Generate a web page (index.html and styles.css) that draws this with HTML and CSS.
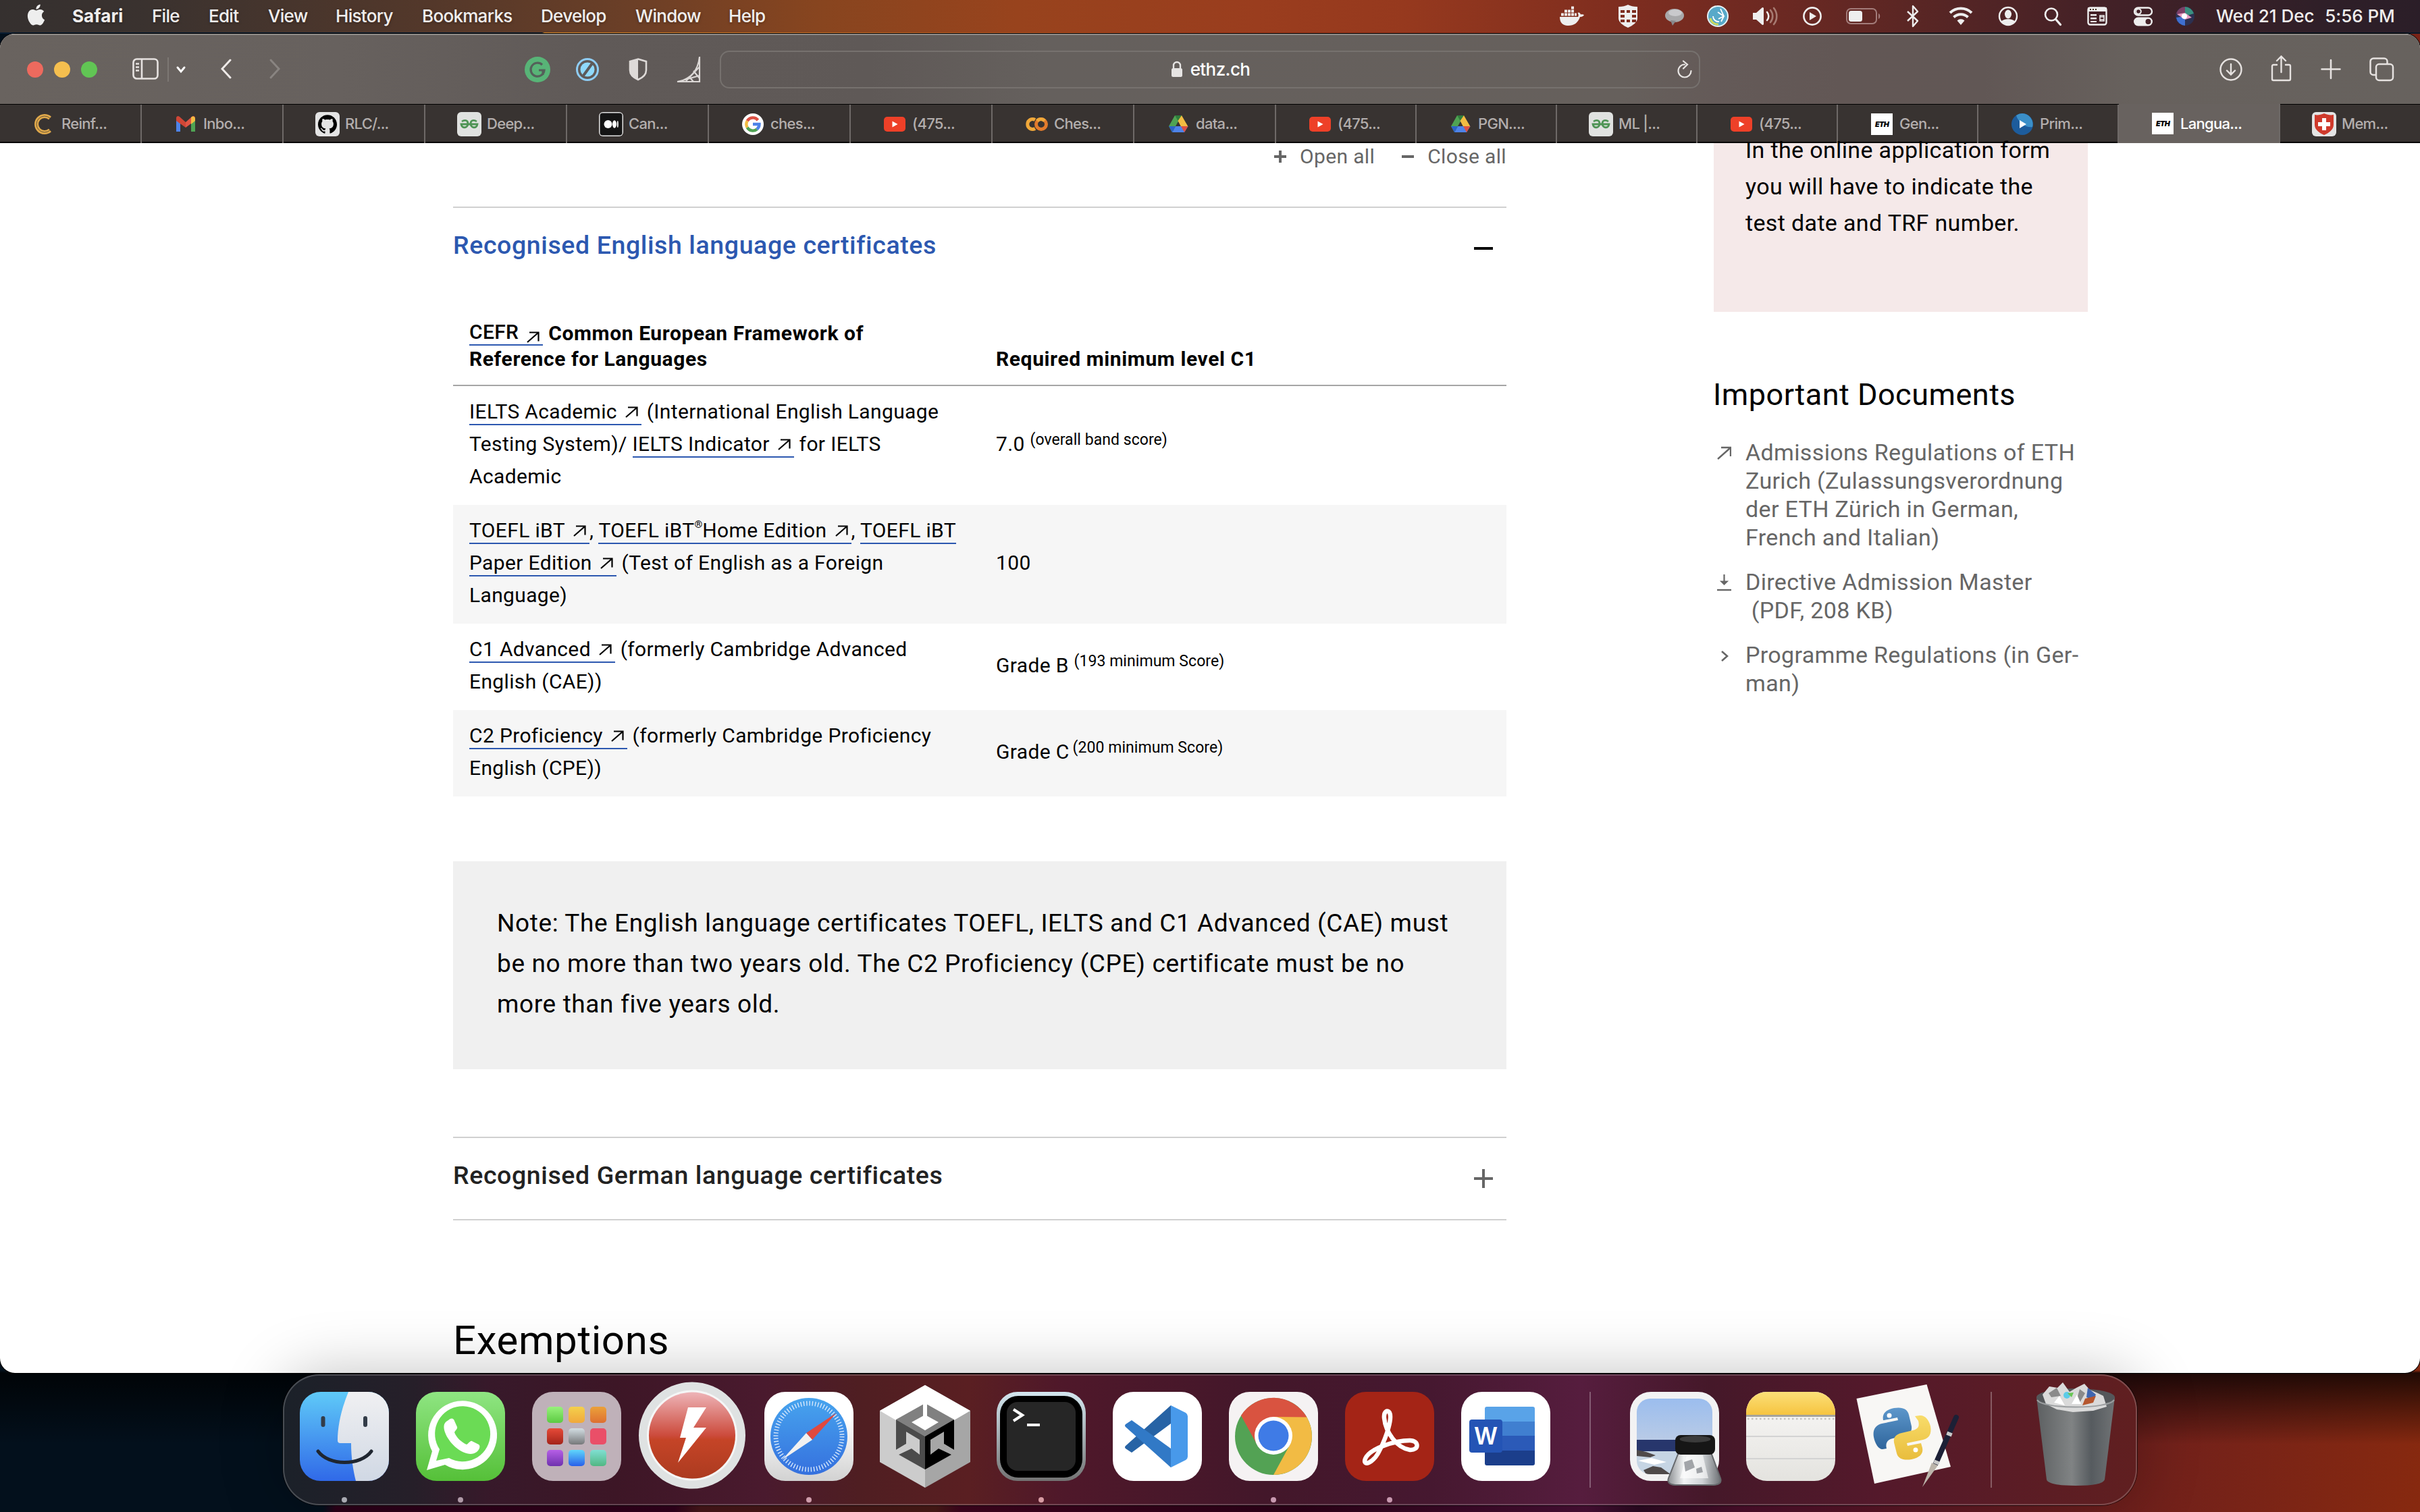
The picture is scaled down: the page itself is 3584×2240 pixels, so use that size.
FILE: index.html
```
<!DOCTYPE html>
<html lang="en">
<head>
<meta charset="utf-8">
<title>Language certificates</title>
<link rel="stylesheet" href="styles.css">
</head>
<body>
<svg class="defs" aria-hidden="true">
  <defs>
    <symbol id="ext" viewBox="0 0 19 17"><path d="M4 1.500h13.500v13M17 2 1 16" fill="none" stroke="currentColor" stroke-width="2.200"/></symbol>
    <symbol id="yt" viewBox="0 0 36 36"><rect x="2" y="7" width="32" height="22" rx="5" fill="#ee4028"/><path d="M14.500 13.500v9l8-4.500z" fill="#fff"/></symbol>
    <symbol id="drive" viewBox="0 0 36 36"><path d="M13 5h10l-8.500 15L9 30 4 21z" fill="#4fa353"/><path d="M13 5h10l-5 8.500z" fill="#2f7d3c"/><path d="M23 5l9.500 16.500H22L17.500 13z" fill="#f2bc42"/><path d="M9 30l5-9h18.500L27 30z" fill="#4e83e8"/><path d="M22 21h10.500L27 30z" fill="#dd5144"/><path d="M4 21h10L9 30z" fill="#2c62c9"/></symbol>
    <symbol id="gfg" viewBox="0 0 36 36"><rect width="36" height="36" rx="6" fill="#e0e2e0"/><path d="M7 14c4-3 9-2 9 3 0 7-9 8-10 1h24c-1 7-10 6-10-1 0-5 5-6 9-3" fill="none" stroke="#4f9455" stroke-width="2.800"/></symbol>
    <symbol id="eth" viewBox="0 0 36 36"><rect x="2" y="2" width="32" height="32" fill="#fff"/><text x="18" y="22" text-anchor="middle" font-family="Inter, sans-serif" font-weight="900" font-style="italic" font-size="10.500" textLength="20" lengthAdjust="spacingAndGlyphs" fill="#000">ETH</text></symbol>
    <linearGradient id="gFinder" x1="0" y1="0" x2="0" y2="1"><stop offset="0" stop-color="#5fcaf8"/><stop offset="1" stop-color="#3069e8"/></linearGradient>
    <linearGradient id="gFace" x1="0" y1="0" x2="0" y2="1"><stop offset="0" stop-color="#f0f0f2"/><stop offset="1" stop-color="#d0d8e4"/></linearGradient>
    <linearGradient id="gWa" x1="0" y1="0" x2="0" y2="1"><stop offset="0" stop-color="#8fe582"/><stop offset="1" stop-color="#55c038"/></linearGradient>
    <linearGradient id="gBolt" x1="0" y1="0" x2="0" y2="1"><stop offset="0" stop-color="#eeb4b8"/><stop offset=".5" stop-color="#cc4b3c"/><stop offset=".55" stop-color="#c54427"/><stop offset="1" stop-color="#ac3b20"/></linearGradient>
    <linearGradient id="gWhite" x1="0" y1="0" x2="0" y2="1"><stop offset=".3" stop-color="#fff"/><stop offset="1" stop-color="#d2d2d2"/></linearGradient>
    <linearGradient id="gSaf" x1="0" y1="0" x2="0" y2="1"><stop offset="0" stop-color="#47a4ee"/><stop offset="1" stop-color="#3570de"/></linearGradient>
    <linearGradient id="gTerm" x1="0" y1="0" x2="0" y2="1"><stop offset="0" stop-color="#d3e6ef"/><stop offset="1" stop-color="#737373"/></linearGradient>
    <linearGradient id="gSky" x1="0" y1="0" x2="0" y2="1"><stop offset="0" stop-color="#9bbdee"/><stop offset="1" stop-color="#b9cbe6"/></linearGradient>
    <linearGradient id="gYel" x1="0" y1="0" x2="0" y2="1"><stop offset="0" stop-color="#fbdf78"/><stop offset="1" stop-color="#f6c440"/></linearGradient>
    <linearGradient id="gPaper" x1="0" y1="0" x2="0" y2="1"><stop offset="0" stop-color="#f9f8f7"/><stop offset="1" stop-color="#e4e3df"/></linearGradient>
    <linearGradient id="gCan" x1="0" y1="0" x2="1" y2="0"><stop offset="0" stop-color="#5d6062"/><stop offset=".45" stop-color="#808384"/><stop offset=".7" stop-color="#565b5f"/><stop offset="1" stop-color="#707375"/></linearGradient>
    <linearGradient id="gGlass" x1="0" y1="0" x2="1" y2="0"><stop offset="0" stop-color="#8c8f92"/><stop offset=".3" stop-color="#f2f4f5"/><stop offset=".65" stop-color="#cfd3d6"/><stop offset="1" stop-color="#6b6e72"/></linearGradient>
    <linearGradient id="gPyB" x1="0" y1="0" x2="0" y2="1"><stop offset="0" stop-color="#5d97cb"/><stop offset="1" stop-color="#2f659c"/></linearGradient>
    <linearGradient id="gPyY" x1="0" y1="0" x2="0" y2="1"><stop offset="0" stop-color="#f8dc6a"/><stop offset="1" stop-color="#e9bd3c"/></linearGradient>
    <linearGradient id="gGreen" x1="0" y1="0" x2="0" y2="1"><stop offset="0" stop-color="#98f27c"/><stop offset="1" stop-color="#5cca42"/></linearGradient>
    <linearGradient id="gAmber" x1="0" y1="0" x2="0" y2="1"><stop offset="0" stop-color="#f4d04c"/><stop offset="1" stop-color="#f0a83c"/></linearGradient>
    <linearGradient id="gOrange" x1="0" y1="0" x2="0" y2="1"><stop offset="0" stop-color="#eba13a"/><stop offset="1" stop-color="#de7031"/></linearGradient>
    <linearGradient id="gRed" x1="0" y1="0" x2="0" y2="1"><stop offset="0" stop-color="#e74a38"/><stop offset="1" stop-color="#a3241a"/></linearGradient>
    <linearGradient id="gGray" x1="0" y1="0" x2="0" y2="1"><stop offset="0" stop-color="#d3dee3"/><stop offset="1" stop-color="#76787a"/></linearGradient>
    <linearGradient id="gViolet" x1="0" y1="0" x2="0" y2="1"><stop offset="0" stop-color="#b65fe6"/><stop offset="1" stop-color="#6f31ae"/></linearGradient>
    <linearGradient id="gBlue" x1="0" y1="0" x2="0" y2="1"><stop offset="0" stop-color="#5fd6fb"/><stop offset="1" stop-color="#2860ea"/></linearGradient>
    <linearGradient id="gTeal" x1="0" y1="0" x2="0" y2="1"><stop offset="0" stop-color="#80dfd2"/><stop offset="1" stop-color="#51b783"/></linearGradient>
  </defs>
</svg>

<header class="menubar">
  <svg class="apple" viewBox="0 0 24 24"><path fill="#eee" d="M12.152 6.896c-.948 0-2.415-1.078-3.96-1.04-2.04.027-3.91 1.183-4.961 3.014-2.117 3.675-.546 9.103 1.519 12.09 1.013 1.454 2.208 3.09 3.792 3.039 1.520-.065 2.090-.987 3.935-.987 1.831 0 2.350.987 3.960.948 1.637-.026 2.676-1.480 3.676-2.948 1.156-1.688 1.636-3.325 1.662-3.415-.039-.013-3.182-1.221-3.220-4.857-.026-3.040 2.480-4.494 2.597-4.559-1.429-2.090-3.623-2.324-4.390-2.376-2-.156-3.675 1.090-4.610 1.090zM15.530 3.830c.843-1.012 1.400-2.427 1.245-3.830-1.207.052-2.662.805-3.532 1.818-.780.896-1.454 2.338-1.273 3.714 1.338.104 2.715-.688 3.559-1.701"/></svg>
  <nav class="menus"><b>Safari</b><span>File</span><span>Edit</span><span>View</span><span>History</span><span>Bookmarks</span><span>Develop</span><span>Window</span><span>Help</span></nav>
  <div class="status">
    <svg viewBox="0 0 40 40"><path d="M2 21h27c1-1 1-4-.5-6 2-1.500 4 .5 4.500 2.500 2-.5 4 0 5 .8-1.500 2.500-4 2.700-6 2.700C29 30 23 34 14 34 6 34 2 29 2 21zM4 15.500h4v4H4zM9 15.500h4v4H9zM14 15.500h4v4h-4zM19 15.500h4v4h-4zM24 15.500h3v4h-3zM9 10.500h4v4H9zM14 10.500h4v4h-4zM19 10.500h4v4h-4zM19 5.500h4v4h-4z"/></svg>
    <svg viewBox="0 0 40 40"><path fill-rule="evenodd" d="M6 6c6 0 10-1 14-3 4 2 8 3 14 3v17c0 6-7 11-14 14C13 34 6 29 6 23zM9 11h6v4H9zm9 0h5v4h-5zm8 0h6v4h-6zM9 18h6v4H9zm17 0h6v4h-6zM9 25h6v4H9zm9 0h5v4h-5zm8 0h6v4h-6z"/></svg>
    <svg viewBox="0 0 40 40"><ellipse cx="20" cy="19" rx="14" ry="10" fill="#a8a8aa"/><ellipse cx="21" cy="15" rx="10" ry="5" fill="#c9c9cc"/><path d="M14 26l3 8 5-7z" fill="#88888c"/></svg>
    <svg viewBox="0 0 40 40"><circle cx="20" cy="20" r="16" fill="#e8f3f6"/><circle cx="20" cy="20" r="14" fill="#58a9c9"/><path d="M9 23a11 11 0 0 0 12 9" fill="none" stroke="#cfdb5e" stroke-width="3"/><path d="M13 20a8 8 0 0 0 9 8M20 14l9 6-8 4M24 9l5 11-4 8" fill="none" stroke="#fff" stroke-width="1.800"/></svg>
    <svg viewBox="0 0 40 40"><path d="M2 15h5l9-8a2 2 0 0 1 2 1v24a2 2 0 0 1-2 1l-9-8H2z"/><g fill="none" stroke-width="2.600" stroke-linecap="round"><path stroke="#eee" d="M23 14a9 9 0 0 1 0 12"/><path stroke="#a77b72" d="M28 11a14 14 0 0 1 0 18M33 8a19 19 0 0 1 0 24"/></g></svg>
    <svg viewBox="0 0 40 40"><circle cx="20" cy="20" r="12.600" fill="none" stroke="#eee" stroke-width="2.600"/><path d="M16 14v12l10-6z"/></svg>
    <svg class="batt" viewBox="0 0 54 40"><rect x="2" y="9" width="44" height="22" rx="6" fill="none" stroke="#a37c7a" stroke-width="2"/><rect x="5" y="12" width="20" height="16" rx="3.500"/><path d="M49 16c3 1 3 7 0 8z" fill="#a37c7a"/></svg>
    <svg viewBox="0 0 40 40"><path d="M12 13l15 14-7 8V5l7 8-15 14" fill="none" stroke="#eee" stroke-width="2.400" stroke-linejoin="round"/></svg>
    <svg viewBox="0 0 40 40"><path d="M4 15a23 23 0 0 1 32 0M9.500 21.500a15 15 0 0 1 21 0" fill="none" stroke="#eee" stroke-width="4"/><path d="M14.500 26.500a8 8 0 0 1 11 0L20 33z"/></svg>
    <svg viewBox="0 0 40 40"><circle cx="20" cy="20" r="13" fill="none" stroke="#eee" stroke-width="2.400"/><ellipse cx="20" cy="17" rx="5" ry="6.500"/><path d="M10 28c3-5 17-5 20 0-5 6-15 6-20 0z"/></svg>
    <svg viewBox="0 0 40 40"><circle cx="18" cy="17.500" r="9" fill="none" stroke="#eee" stroke-width="2.600"/><path d="M24.500 24.500l7 8" stroke="#eee" stroke-width="3.200" stroke-linecap="round"/></svg>
    <svg viewBox="0 0 40 40"><rect x="6.500" y="7.500" width="27" height="25" rx="3" fill="none" stroke="#eee" stroke-width="2.400"/><path d="M6 7h28v6H6zM10 17h9v2.500h-9zM10 22h9v2.500h-9zM10 27h9v2h-9z"/><path d="M24 19h6v8h-6zM24 21h6M24 25h6" fill="none" stroke="#eee" stroke-width="1.600"/><path d="M9 10h2M13 10h2M17 10h2" stroke="#432" stroke-width="2"/></svg>
    <svg viewBox="0 0 40 40"><rect x="7" y="7.500" width="26" height="11" rx="5.500" fill="none" stroke="#eee" stroke-width="2.400"/><circle cx="13" cy="13" r="3.800" fill="none" stroke="#eee" stroke-width="2"/><rect x="6" y="21.500" width="28" height="13" rx="6.500"/><circle cx="27.500" cy="28" r="4" fill="#452329"/></svg>
    <svg viewBox="0 0 40 40"><circle cx="20" cy="20" r="14" fill="#2c3050"/><path d="M20 6a14 14 0 0 1 13 10L20 20z" fill="#3a8f80"/><path d="M7 16A14 14 0 0 1 20 6v14z" fill="#7c3f66"/><path d="M7 22a14 14 0 0 0 13 12V20z" fill="#3f6fd0"/><path d="M8 17l12-2 10 7-10 3z" fill="#e79bc0"/><circle cx="19" cy="20" r="4" fill="#fff"/></svg>
    <span class="clock"><span>Wed 21 Dec</span><span>5:56 PM</span></span>
  </div>
</header>

<main class="window">
  <div class="toolbar">
    <div class="lights"><i class="red"></i><i class="amber"></i><i class="green"></i></div>
    <svg width="40" height="36" viewBox="0 0 40 36" fill="none" stroke="#e6e2e0" stroke-width="2.600"><rect x="1.500" y="2.500" width="36" height="29" rx="5"/><path d="M14 3v28M5 9.500h5M5 14.500h5M5 19.500h5"/></svg>
    <i class="vline"></i>
    <svg width="20" height="20" viewBox="0 0 20 20" fill="none" stroke="#fff" stroke-width="3" stroke-linecap="round"><path d="M5 7l5 6 5-6"/></svg>
    <svg width="18" height="34" viewBox="0 0 18 34" fill="none" stroke="#eeeae8" stroke-width="3" stroke-linecap="round"><path d="M14 3L2 16l12 13"/></svg>
    <svg width="18" height="34" viewBox="0 0 18 34" fill="none" stroke="#898481" stroke-width="3" stroke-linecap="round"><path d="M3 3l12 13L3 29"/></svg>
    <svg width="38" height="38" viewBox="0 0 38 38"><circle cx="19" cy="19" r="19" fill="#58b477"/><path d="M26 12a10 10 0 1 0 3 8h-8M27 20v7" fill="none" stroke="#54605a" stroke-width="3.200"/></svg>
    <svg width="36" height="36" viewBox="0 0 36 36"><circle cx="18" cy="18" r="15.500" fill="none" stroke="#8fcdf5" stroke-width="3"/><circle cx="18" cy="18" r="10.500" fill="#8fd9fb"/><path d="M12 27L25 9" stroke="#5b5a5c" stroke-width="4"/></svg>
    <svg width="32" height="36" viewBox="0 0 32 36"><path d="M16 2.500l12 3.500v13c0 6-5 11-12 14-7-3-12-8-12-14V6z" fill="none" stroke="#dedad8" stroke-width="2.600"/><path d="M16 2.500v30.500C9 30 4 25 4 19V6z" fill="#dedad8"/></svg>
    <svg width="38" height="40" viewBox="0 0 38 40" fill="none" stroke="#dcd8d6" stroke-width="2.200"><path d="M1 38c20-3 31-17 33-37v37zM6 37l28-8M18 30l7 8M25 22l9 11M14 37l20-21"/></svg>
    <div class="address">
      <span class="host"><svg width="18" height="26" viewBox="0 0 18 26"><rect x="1" y="11" width="16" height="13" rx="2.500" fill="#e6e4e3"/><path d="M4 12V7a5 5 0 0 1 10 0v5" fill="none" stroke="#e6e4e3" stroke-width="2.400"/></svg>ethz.ch</span>
      <svg width="24" height="28" viewBox="0 0 24 28" fill="none" stroke="#e8e5e3" stroke-width="2.200" stroke-linecap="round"><path d="M12 6.500a9.500 9.500 0 1 0 9.500 9.500M10 1.500l6 5-6 6"/></svg>
    </div>
    <svg width="36" height="36" viewBox="0 0 36 36" fill="none" stroke="#e6e2e0" stroke-width="2.400" stroke-linecap="round"><circle cx="18" cy="18" r="15.500"/><path d="M18 10v15M12 19.500l6 6 6-6"/></svg>
    <svg width="34" height="42" viewBox="0 0 34 42" fill="none" stroke="#e6e2e0" stroke-width="2.400" stroke-linecap="round"><path d="M10 14H5a2 2 0 0 0-2 2v19a2 2 0 0 0 2 2h23a2 2 0 0 0 2-2V16a2 2 0 0 0-2-2h-5M16.500 25V2M10 8l6.500-6.500L23 8"/></svg>
    <svg width="32" height="32" viewBox="0 0 32 32" stroke="#e6e2e0" stroke-width="2.600" stroke-linecap="round"><path d="M16 2v27M2.500 15.500h27"/></svg>
    <svg width="38" height="38" viewBox="0 0 38 38" fill="none" stroke="#e6e2e0" stroke-width="2.500"><rect x="11" y="11" width="25" height="24" rx="4.500"/><path d="M11 27H7a4.500 4.500 0 0 1-4.500-4.500V7A4.500 4.500 0 0 1 7 2.500h16A4.500 4.500 0 0 1 27.500 7v4"/></svg>
  </div>

  <div class="tabs">
    <div class="tab"><svg viewBox="0 0 36 36"><path d="M27 9a12 12 0 1 0 0 18" fill="none" stroke="#e0a94b" stroke-width="6"/><path d="M27 9a12 12 0 1 0 0 18" fill="none" stroke="#6a5636" stroke-width="1"/></svg>Reinf...</div>
    <div class="tab"><svg viewBox="0 0 36 36"><path d="M4 9v20h6V14z" fill="#4e83e8"/><path d="M26 14v15h6V9z" fill="#4fa353"/><path d="M4 9c0-3 3-4 5-2l9 8v8L4 13z" fill="#cf4636"/><path d="M32 9c0-3-3-4-5-2l-9 8v8l8-6z" fill="#e05545"/><path d="M26 8c3-3 6-1 6 2v3l-6 5z" fill="#f2bc42"/></svg>Inbo...</div>
    <div class="tab"><svg viewBox="0 0 36 36"><rect width="36" height="36" rx="6" fill="#e4e4e4"/><g transform="translate(4 4) scale(1.167)"><path d="M12 .297c-6.630 0-12 5.373-12 12 0 5.303 3.438 9.800 8.205 11.385.600.113.820-.258.820-.577 0-.285-.010-1.040-.015-2.040-3.338.724-4.042-1.610-4.042-1.610C4.422 18.070 3.633 17.700 3.633 17.700c-1.087-.744.084-.729.084-.729 1.205.084 1.838 1.236 1.838 1.236 1.070 1.835 2.809 1.305 3.495.998.108-.776.417-1.305.760-1.605-2.665-.300-5.466-1.332-5.466-5.930 0-1.310.465-2.380 1.235-3.220-.135-.303-.540-1.523.105-3.176 0 0 1.005-.322 3.300 1.230.960-.267 1.980-.399 3-.405 1.020.006 2.040.138 3 .405 2.280-1.552 3.285-1.230 3.285-1.230.645 1.653.240 2.873.120 3.176.765.840 1.230 1.910 1.230 3.220 0 4.610-2.805 5.625-5.475 5.920.420.360.810 1.096.810 2.220 0 1.606-.015 2.896-.015 3.286 0 .315.210.690.825.570C20.565 22.092 24 17.592 24 12.297c0-6.627-5.373-12-12-12"/></g></svg>RLC/...</div>
    <div class="tab"><svg><use href="#gfg"/></svg>Deep...</div>
    <div class="tab"><svg viewBox="0 0 36 36"><rect width="36" height="36" rx="6" fill="#e4e4e4"/><rect x="1.500" y="1.500" width="33" height="33" rx="4" fill="#151515"/><circle cx="13.500" cy="18" r="6" fill="#fff"/><ellipse cx="23" cy="18" rx="3" ry="5.700" fill="#fff"/><ellipse cx="27.800" cy="18" rx="1" ry="5" fill="#fff"/></svg>Can...</div>
    <div class="tab"><svg viewBox="0 0 36 36"><circle cx="18" cy="18" r="16" fill="#fff"/><g fill="none" stroke-width="4.400"><path d="M25.500 12A9.600 9.600 0 0 0 9.700 13.200" stroke="#dd5144"/><path d="M9.700 13.200a9.600 9.600 0 0 0 0 9.600" stroke="#f2bc42"/><path d="M9.700 22.800a9.600 9.600 0 0 0 14.300 2.700" stroke="#4fa353"/><path d="M24 25.500a9.600 9.600 0 0 0 3.500-7.500H18" stroke="#4e83e8"/></g></svg>ches...</div>
    <div class="tab"><svg><use href="#yt"/></svg>(475...</div>
    <div class="tab"><svg viewBox="0 0 36 36" fill="none" stroke-width="5"><path d="M16 11.500a7.500 7.500 0 1 0 0 13" stroke="#f0a83a"/><circle cx="25" cy="18" r="7.500" stroke="#e27b2c"/><path d="M19 13a7.500 7.500 0 0 1 11 0" stroke="#f0a83a"/></svg>Ches...</div>
    <div class="tab"><svg><use href="#drive"/></svg>data...</div>
    <div class="tab"><svg><use href="#yt"/></svg>(475...</div>
    <div class="tab"><svg><use href="#drive"/></svg>PGN....</div>
    <div class="tab"><svg><use href="#gfg"/></svg>ML |...</div>
    <div class="tab"><svg><use href="#yt"/></svg>(475...</div>
    <div class="tab"><svg><use href="#eth"/></svg>Gen...</div>
    <div class="tab"><svg viewBox="0 0 36 36"><circle cx="18" cy="18" r="16" fill="#1d5c9c"/><path d="M18 2a16 16 0 0 1 15 20C24 24 12 16 9 5a16 16 0 0 1 9-3z" fill="#3b8fc8"/><path d="M14 12v12l10-6z" fill="#fff"/></svg>Prim...</div>
    <div class="tab active"><svg><use href="#eth"/></svg>Langua...</div>
    <div class="tab"><svg viewBox="0 0 36 36"><rect width="36" height="36" rx="6" fill="#e4e4e4"/><path d="M4 4c5 1 9 0 14-2 5 2 9 3 14 2v15c0 7-7 12-14 15C11 31 4 26 4 19z" fill="#cf3a2c"/><path d="M15 9h6v6h6v6h-6v6h-6v-6H9v-6h6z" fill="#fff"/></svg>Mem...</div>
  </div>

  <div class="page">
    <article class="content">
      <div class="toggle-all"><i class="pm plus"></i><span>Open all</span><i class="pm"></i><span>Close all</span></div>
      <h3 class="acc open"><span>Recognised English language certificates</span><svg width="28" height="28" viewBox="0 0 28 28"><path d="M0 14h28" stroke="#000" stroke-width="4"/></svg></h3>
      <div class="table">
        <div class="row head"><div><a class="cefr">CEFR<svg><use href="#ext"/></svg></a> Common European Framework of<br>Reference for Languages</div><div>Required minimum level C1</div></div>
        <div class="row"><div><a>IELTS Academic<svg><use href="#ext"/></svg></a> (International English Language<br>Testing System)/ <a>IELTS Indicator<svg><use href="#ext"/></svg></a> for IELTS<br>Academic</div><div>7.0 <sup>(overall band score)</sup></div></div>
        <div class="row"><div><a>TOEFL iBT<svg><use href="#ext"/></svg></a>, <a>TOEFL iBT<sup class="reg">®</sup>Home Edition<svg><use href="#ext"/></svg></a>, <a>TOEFL iBT</a><br><a>Paper Edition<svg><use href="#ext"/></svg></a> (Test of English as a Foreign<br>Language)</div><div>100</div></div>
        <div class="row"><div><a>C1 Advanced<svg><use href="#ext"/></svg></a> (formerly Cambridge Advanced<br>English (CAE))</div><div>Grade B <sup>(193 minimum Score)</sup></div></div>
        <div class="row"><div><a>C2 Proficiency<svg><use href="#ext"/></svg></a> (formerly Cambridge Proficiency<br>English (CPE))</div><div>Grade C<sup class="tight">(200 minimum Score)</sup></div></div>
      </div>
      <p class="note">Note: The English language certificates TOEFL, IELTS and C1 Advanced (CAE) must<br>be no more than two years old. The C2 Proficiency (CPE) certificate must be no<br>more than five years old.</p>
      <h3 class="acc closed"><span>Recognised German language certificates</span><svg width="28" height="28" viewBox="0 0 28 28"><path d="M0 14h28M14 0v28" stroke="#666" stroke-width="4"/></svg></h3>
      <h2 class="exempt">Exemptions</h2>
    </article>
    <aside class="side">
      <p class="pink">In the online application form<br>you will have to indicate the<br>test date and TRF number.</p>
      <h3>Important Documents</h3>
      <ul>
        <li><svg viewBox="0 0 24 42"><path d="M9 14h14v13M22 15L4 31" fill="none" stroke="#666" stroke-width="2.400"/></svg><span>Admissions Regulations of ETH<br>Zurich (Zulassungsverordnung<br>der ETH Zürich in German,<br>French and Italian)</span></li>
        <li><svg viewBox="0 0 24 42"><path d="M13.500 10v12M9.500 20.500l4 4 4-4z" fill="#666" stroke="#666" stroke-width="2.200"/><path d="M3 33h21" stroke="#666" stroke-width="2.400"/></svg><span>Directive Admission Master<br>&nbsp;(PDF, 208 KB)</span></li>
        <li><svg viewBox="0 0 24 42"><path d="M10 16l8 7-8 7" fill="none" stroke="#666" stroke-width="2.600"/></svg><span>Programme Regulations (in Ger-<br>man)</span></li>
      </ul>
    </aside>
  </div>
</main>

<footer class="dock">
  <svg viewBox="0 0 172 194"><clipPath id="sq"><rect x="20" y="26" width="132" height="132" rx="31"/></clipPath><g clip-path="url(#sq)"><path d="M20 26h132v132H20z" fill="url(#gFinder)"/><path d="M92 26C82 50 76 76 76 98q0 4 4 4h16c0 22 3 40 7 56h60V26z" fill="url(#gFace)"/></g><path d="M54.500 65v10M117 65v10" stroke="#333c48" stroke-width="6" stroke-linecap="round"/><path d="M47 114c16 22 63 22 79 0" fill="none" stroke="#1f2630" stroke-width="5" stroke-linecap="round"/><circle cx="86" cy="186" r="4" fill="#a9aab2"/></svg>
  <svg viewBox="0 0 172 194"><rect x="20" y="26" width="132" height="132" rx="31" fill="url(#gWa)"/><path d="M36 142l8-28a51 51 0 1 1 19 20z" fill="#fff"/><path d="M50 128l5-17a41 41 0 1 1 14 13z" fill="#6bdb55"/><path d="M68 68c4-4 8-3 9 1l4 9c1 3-3 5-4 8 3 8 11 15 18 18 3-1 5-6 8-5l10 5c3 2 1 8-3 11-8 6-20 2-30-6C69 100 59 84 62 74c1-3 4-5 6-6z" fill="#fff"/><circle cx="86" cy="186" r="4" fill="#b09aa8"/></svg>
  <svg viewBox="0 0 172 194"><rect x="20" y="26" width="132" height="132" rx="31" fill="#bfb1b9"/><g><rect x="42" y="48" width="24" height="24" rx="5" fill="url(#gGreen)"/><rect x="74" y="48" width="24" height="24" rx="5" fill="url(#gAmber)"/><rect x="106" y="48" width="24" height="24" rx="5" fill="url(#gOrange)"/><rect x="42" y="80" width="24" height="24" rx="5" fill="url(#gRed)"/><rect x="74" y="80" width="24" height="24" rx="5" fill="url(#gGray)"/><rect x="106" y="80" width="24" height="24" rx="5" fill="#ea4f68"/><rect x="42" y="112" width="24" height="24" rx="5" fill="url(#gViolet)"/><rect x="74" y="112" width="24" height="24" rx="5" fill="url(#gBlue)"/><rect x="106" y="112" width="24" height="24" rx="5" fill="url(#gTeal)"/></g></svg>
  <svg viewBox="0 0 172 194"><circle cx="85" cy="90.500" r="79" fill="#dfe2e2"/><circle cx="85" cy="90.500" r="67" fill="#f5f6f6"/><circle cx="85" cy="90.500" r="64" fill="url(#gBolt)"/><path d="M79 49h27L87 79h19l-42 52 12-37h-9z" fill="#fff"/></svg>
  <svg viewBox="0 0 172 194"><rect x="20" y="26" width="132" height="132" rx="31" fill="url(#gWhite)"/><circle cx="86" cy="92" r="57" fill="url(#gSaf)"/><circle cx="86" cy="92" r="49" fill="none" stroke="#d7e8fb" stroke-width="7" stroke-dasharray="1.400 2.877"/><path d="M127 57L91 97l-9-10z" fill="#e0493f"/><path d="M46 127l36-40 9 10z" fill="#f1f1f1"/><circle cx="86" cy="186" r="4" fill="#cf9dab"/></svg>
  <svg viewBox="0 0 172 194"><path d="M86 16l67 38v76l-67 38z" fill="#a6a6a6"/><path d="M86 16L19 54v76l67 38z" fill="#ccc"/><path d="M86 16l67 38-24 14-43-25-43 25-24-14z" fill="#fff"/><path d="M86 43l43 24-43 25-43-25z" fill="#808080"/><path d="M86 60l20 11-20 12-20-12zM83 42h6v20h-6z" fill="#fff"/><path d="M43 67l43 25v49l-39-22 11-16-15 9z" fill="#4b4b4b"/><path d="M129 67L86 92v49l39-22-11-16 15 9z" fill="#000"/><path d="M58 85l20 12v22l-12-9-19 9-4-7 15-9z" fill="#ccc"/><path d="M114 85L94 97v22l12-9 19 9 4-7-15-9z" fill="#a6a6a6"/></svg>
  <svg viewBox="0 0 172 194"><rect x="20" y="26" width="132" height="132" rx="31" fill="url(#gTerm)"/><rect x="25" y="32" width="122" height="121" rx="27" fill="#000"/><rect x="35" y="41" width="102" height="102" rx="16" fill="#262626"/><path d="M45 52l13 8.500L45 69M65 75h19" fill="none" stroke="#fff" stroke-width="4.200"/><circle cx="86" cy="186" r="4" fill="#d89ca4"/></svg>
  <svg viewBox="0 0 172 194"><rect x="20" y="26" width="132" height="132" rx="31" fill="#fff"/><path d="M106 46v27L48 116l-9-6q-2-2 0-4z" fill="#2763a5"/><path d="M106 138v-28L48 68l-9 6q-2 2 0 4z" fill="#3179c6"/><path d="M106 46l22 11q3 2 3 5v60q0 3-3 5l-22 11z" fill="#4899ea"/></svg>
  <svg viewBox="0 0 172 194"><rect x="20" y="26" width="132" height="132" rx="31" fill="#f5f2f3"/><circle cx="86" cy="92" r="57" fill="#53a254"/><path d="M86 149a57 57 0 0 0 49-86H86l24 42z" fill="#f2bb44"/><path d="M135.400 63.500A57 57 0 0 0 38 61l24 44 24-42z" fill="#d95340"/><circle cx="86" cy="91" r="28" fill="#fff"/><circle cx="86" cy="91" r="22.500" fill="#3f7be6"/><circle cx="86" cy="186" r="4" fill="#c899b0"/></svg>
  <svg viewBox="0 0 172 194"><rect x="20" y="26" width="132" height="132" rx="31" fill="#a42416"/><path d="M50 125c-5 12 12 8 22-14 10-20 18-46 14-54-3-5-9-2-8 8 2 20 18 44 38 47 14 1 14-14 0-14-22 0-60 12-66 27z" fill="none" stroke="#fff" stroke-width="6.500"/><circle cx="86" cy="186" r="4" fill="#c899b0"/></svg>
  <svg viewBox="0 0 172 194"><rect x="20" y="26" width="132" height="132" rx="31" fill="#fff"/><path d="M58 48h68q3 0 3 3v19H55V51q0-3 3-3z" fill="#59a3e8"/><path d="M55 70h74v21H55z" fill="#407fd0"/><path d="M55 91h74v22H55z" fill="#2b5ab8"/><path d="M55 113h74v19q0 3-3 3H58q-3 0-3-3z" fill="#1b3e8b"/><rect x="32" y="67" width="49" height="49" rx="4" fill="#2454b5"/><text x="56.500" y="104" text-anchor="middle" font-family="Inter, sans-serif" font-weight="600" font-size="36" textLength="35" lengthAdjust="spacingAndGlyphs" fill="#fff">W</text></svg>
  <i class="sep"></i>
  <svg viewBox="0 0 172 194"><rect x="20" y="26" width="132" height="132" rx="31" fill="#f2f2f3"/><clipPath id="ph"><rect x="30" y="36" width="112" height="112" rx="20"/></clipPath><g clip-path="url(#ph)"><path d="M30 36h112v62H30z" fill="url(#gSky)"/><path d="M30 97h112v22H30z" fill="#27366c"/><path d="M30 114h112v34H30z" fill="#c6d5e4"/><path d="M30 112l14 3 14 5-8 3-20-2zM40 142l14-6 12 2 14 10H44z" fill="#4f4a4a"/><path d="M32 128l20-4 22 6-18 4z" fill="#fff"/></g><path d="M92 116h48l14 38q3 9-10 10H87q-13-1-10-10z" fill="url(#gGlass)" stroke="#66696c" stroke-width="2"/><path d="M104 120l-10 34h42l-8-34z" fill="#fff" opacity=".6"/><path d="M100 130l12-4 4 12-14 6zM118 140l8-3 2 8-9 2z" fill="#7d8288" opacity=".7"/><rect x="87" y="90" width="59" height="29" rx="8" fill="#161616"/><ellipse cx="116.500" cy="96" rx="23" ry="5" fill="#3b3b3b"/></svg>
  <svg viewBox="0 0 172 194"><g clip-path="url(#sq)"><path d="M20 26h132v132H20z" fill="url(#gPaper)"/><path d="M20 26h132v34H20z" fill="url(#gYel)"/><path d="M20 60h132v3H20z" fill="#a5a39b"/><path d="M22 66h130" stroke="#c4c2bf" stroke-width="2.500" stroke-dasharray="2.500 3.500"/><path d="M20 92h132M20 125h132" stroke="#d3d3d3" stroke-width="2"/></g></svg>
  <svg viewBox="0 0 172 194"><path d="M11.500 36l104-21L151 137 38 162z" fill="#f8f7f5"/><path d="M51 68c-2-10 5-16 16-18 12-2 20 1 22 10l4 17c1 8-3 12-11 14l-17 4c-8 2-11 7-9 15l-6 1c-6 0-11-8-13-18-2-11 3-18 12-20l24-5-1-4-20 4z" fill="url(#gPyB)"/><path d="M120 78c3 10-1 16-10 18l-18 4c-8 2-10 6-8 14l4 4-22-4 4 12c2 8 10 11 22 9 11-2 18-8 16-16l-1-6-20 4-1-4 24-5c9-2 13-9 11-19-2-10-8-17-15-15l-7 1 2 8" fill="none"/><path d="M96 64l7-1c7-1 14 6 16 16 2 11-2 18-11 20l-24 5 1 4 20-4 2 7c2 9-5 15-16 17-12 2-20-1-22-9l-4-16c-1-8 3-12 11-14l17-4c8-2 10-6 8-14z" transform="translate(2 -2)" fill="url(#gPyY)"/><circle cx="60" cy="61" r="3.500" fill="#fff"/><circle cx="99" cy="112" r="3.500" fill="#fff"/><path d="M159 64L129 132" stroke="#1c2036" stroke-width="8" stroke-linecap="round"/><path d="M150 86l-2 5M131 128l-2 5" stroke="#c9c9c9" stroke-width="8"/><path d="M123 131l9 4-23 32z" fill="#bcb5ab"/></svg>
  <i class="sep"></i>
  <svg viewBox="0 0 172 194"><path d="M28 34h116l-15 122q-3 9-43 9t-43-9z" fill="url(#gCan)"/><ellipse cx="86" cy="34" rx="58" ry="13" fill="#54575a"/><path d="M37 30l10-12 12 2 8-8 10 14 10-6 12-6 8 9 12 5 8 4 5 16-20 6-30 2-24-4-16-8z" fill="#dadada"/><path d="M46 28l12-8 6 12-14 2zM92 22l8 6-8 14-4-6z" fill="#8a8a8a"/><path d="M104 20l12 10-4 8-10-4z" fill="#3f66b0"/><path d="M100 36l16-4-4 10-16 4z" fill="#b5562e"/><circle cx="73" cy="31" r="5" fill="#5ccbe8"/><path d="M74 28l9-1-3 7z" fill="#67c653"/><path d="M54 42l8-10 8 14M80 44l8-14 6 14" fill="#fff"/><path d="M29 38c8 14 106 14 114 0" fill="none" stroke="#9b9ea0" stroke-width="2"/></svg>
</footer>
</body>
</html>
```
FILE: styles.css
```
* { box-sizing: border-box; }
body {
  margin: 0;
  width: 3584px;
  height: 2240px;
  overflow: hidden;
  position: relative;
  font-family: Roboto, sans-serif;
  background:
    linear-gradient(90deg, #0a1e33 22.4%, #e0912f 22.5%, #c4702b 35%, #a23c1c 50%, #7a2a20 70%, #0a1828 82%) 0 48px / 100% 2px no-repeat,
    linear-gradient(180deg, transparent 2030px, rgba(0,0,0,.75) 2034px, transparent 2140px),
    linear-gradient(97deg, #03101c 0, #03101c 19.5%, #2d0119 20%, #32021d 33%, #48171a 34%, #4a1b17 43%, #40051f 44%, #2e0219 57%, #4a1036 68%, #2c0a22 70%, #4d0f2c 74%, #651c22 84%, #87290f 100%);
}
.defs { position: absolute; width: 0; height: 0; }
svg { display: block; flex: none; }

/* Menu bar */
.menubar {
  height: 48px;
  display: flex;
  align-items: center;
  padding-left: 38px;
  font: 500 26px/48px Inter, sans-serif;
  letter-spacing: -.7px;
  color: #f0eeed;
  background: linear-gradient(90deg, #35302f 0, #3a322f 6%, #54382a 18%, #6b3f27 26%, #88451f 34%, #98431d 42%, #9a3d1e 52%, #96391e 58%, #7e2d1f 67%, #6d2922 73%, #5a2624 79%, #432127 87%, #2f1f28 96%, #2b1e28);
}
.apple { width: 31px; height: 32px; margin: -4px 38px 0 0; }
.menus { display: grid; grid-template-columns: 118px 84px 88px 100px 128px 176px 140px 138px 1fr; white-space: nowrap; }
.menus b { font-weight: 700; letter-spacing: .1px; }
.menus span, .menus b { text-shadow: 0 1px 4px rgba(0,0,0,.35); }
.status {
  margin-left: auto;
  width: 1276px;
  display: grid;
  grid-template-columns: 83px 69px 64px 70px 70px 69px 80px 71px 70px 66px 66px 68px 62px 66px 1fr;
  align-items: center;
}
.status svg { width: 40px; height: 40px; fill: #eee; }
.status .batt { width: 54px; }
.clock { display: flex; gap: 16px; letter-spacing: -.05px; white-space: nowrap; }

/* Browser window */
.window {
  margin-top: 2px;
  height: 1984px;
  border-radius: 22px;
  overflow: hidden;
  background: #fff;
  box-shadow: 0 0 0 1px #000;
}
.toolbar {
  height: 105px;
  border-top: 2px solid #8f8b88;
  border-bottom: 1px solid #000;
  padding-left: 40px;
  display: grid;
  grid-template-columns: 156px 52px 10px 69px 71px 379px 75px 77px 73px 64px 2220px 76px 74px 72px 1fr;
  align-items: center;
  background: linear-gradient(90deg, #69635f 0, #67615e 14%, #605a58 24%, #5f5957 36%, #65605d 43%, #66605c 67%, #645a58 71%, #625755 76%, #615755 82%, #67615d 88%, #67625e 100%);
}
.lights { display: flex; gap: 16px; }
.lights i { width: 24px; height: 24px; border-radius: 50%; }
.red { background: #ed6a5e; }
.amber { background: #f5bf4f; }
.green { background: #61c554; }
.vline { width: 2px; height: 36px; background: #7c7773; }
.address {
  width: 1452px;
  height: 56px;
  border: 2px solid #76716e;
  border-radius: 14px;
  display: flex;
  align-items: center;
  justify-content: flex-end;
  padding-right: 9px;
}
.host {
  margin: 0 auto;
  padding-left: 34px;
  display: flex;
  align-items: center;
  gap: 11px;
  font: 500 26px/40px Inter, sans-serif;
  letter-spacing: -.6px;
  color: #fff;
}

.tabs {
  height: 57px;
  border-bottom: 2px solid #000;
  display: grid;
  grid-template-columns: 210px repeat(8, 210px) repeat(6, 208px) 239px 207px;
  background: #383331;
}
.tab {
  display: flex;
  align-items: center;
  gap: 8px;
  padding-left: 47px;
  border-right: 2px solid #6e6967;
  font: 500 22px/57px Inter, sans-serif;
  letter-spacing: -.7px;
  color: #b3aead;
}
.tab:last-child { border-right: 0; }
.tab svg { width: 36px; height: 36px; }
.tab.active { background: #68625f; color: #fff; margin-top: -1px; }

/* Page */
.page {
  height: 1822px;
  padding-left: 671px;
  display: flex;
  gap: 307px;
  white-space: nowrap;
  letter-spacing: .35px;
}
.content { width: 1560px; display: flex; flex-direction: column; }
.toggle-all {
  height: 94px;
  padding-top: 2px;
  display: flex;
  justify-content: flex-end;
  align-items: flex-start;
  font-size: 30px;
  line-height: 36px;
  color: #666;
}
.pm { width: 18px; height: 18px; margin: 9px 20px 0 40px; background: linear-gradient(#666, #666) center / 18px 4px no-repeat; }
.plus { background: linear-gradient(#666, #666) center / 18px 4px no-repeat, linear-gradient(#666, #666) center / 4px 18px no-repeat; }
.acc {
  margin: 0;
  padding-right: 20px;
  border-top: 2px solid #d0d0d0;
  display: flex;
  justify-content: space-between;
  font-weight: 500;
  font-size: 37.5px;
  line-height: 48px;
  letter-spacing: .6px;
}
.open { padding-top: 31px; height: 155px; color: #2c58b0; }
.open svg { margin-top: 15px; }
.closed { padding-top: 31px; height: 124px; border-bottom: 2px solid #d0d0d0; color: #222; }
.closed svg { margin-top: 15px; }

.table { font-size: 30px; line-height: 48px; color: #000; }
.row { display: grid; grid-template-columns: 780px 780px; align-items: center; padding: 14px 0 18px; }
.row > div { padding-left: 24px; }
.row:nth-child(odd):not(.head) { background: #f6f6f6; }
.head {
  height: 111px;
  align-items: end;
  padding: 0 0 19px;
  border-bottom: 2px solid #a5a5a5;
  font-weight: 700;
  line-height: 38px;
  letter-spacing: .6px;
}
.table a { border-bottom: 2px solid #2c58b0; padding-bottom: 1px; }
.table a svg { display: inline-block; width: 19px; height: 17px; margin: 0 5px 0 12px; vertical-align: 1px; }
.head a.cefr { font-weight: 500; letter-spacing: .3px; position: relative; top: -2px; }
.head a.cefr svg { vertical-align: -6px; margin-left: 12px; }
.table sup { font-size: 23px; line-height: 0; vertical-align: 9px; letter-spacing: .05px; }
.table sup.tight { margin-left: 5px; }
.table sup.reg { font-size: 15px; vertical-align: 14px; }

.note {
  margin: 96px 0 100px;
  height: 308px;
  padding: 62px 0 0 65px;
  background: #f0f0f0;
  font-size: 37px;
  line-height: 60px;
  letter-spacing: .62px;
}
.exempt { margin: 142px 0 0; font-weight: 400; font-size: 60px; line-height: 72px; letter-spacing: .6px; }

.side { width: 554px; font-size: 34px; }
.pink { display: flow-root; margin: 0; height: 250px; background: #f5e9e9; padding-left: 47px; line-height: 54px; }
.pink::before { content: ""; display: block; margin-top: -17px; }
.side h3 { margin: 96px 0 0 -1px; font-weight: 400; font-size: 45px; line-height: 54px; letter-spacing: .5px; }
.side ul { margin: 37px 0 0; padding: 0; list-style: none; display: flex; flex-direction: column; gap: 24px; color: #666; line-height: 42px; }
.side li { display: flex; gap: 21px; padding-left: 2px; }
.side li svg { width: 24px; height: 42px; }

/* Dock */
.dock {
  position: absolute;
  left: 419px;
  top: 2036px;
  width: 2746px;
  height: 194px;
  padding-left: 5px;
  display: flex;
  border-radius: 54px;
  background: linear-gradient(90deg, #1b2129 0, #261f29 7%, #37192a 11%, #3d1626 18%, #4a1a2e 26%, #4f1e22 31%, #5a1f22 37%, #4f182a 42%, #43172a 53%, #461830 62%, #561d3e 70%, #451829 77%, #54192b 86%, #601f20 100%);
  box-shadow: inset 0 0 0 2px rgba(255,255,255,.2), 0 0 0 1px rgba(0,0,0,.6), 0 0 90px rgba(0,0,0,.25);
}
.dock svg { width: 172px; height: 194px; }
.sep { width: 2px; height: 142px; margin: 26px 38px 0; background: rgba(255,255,255,.28); }
```
